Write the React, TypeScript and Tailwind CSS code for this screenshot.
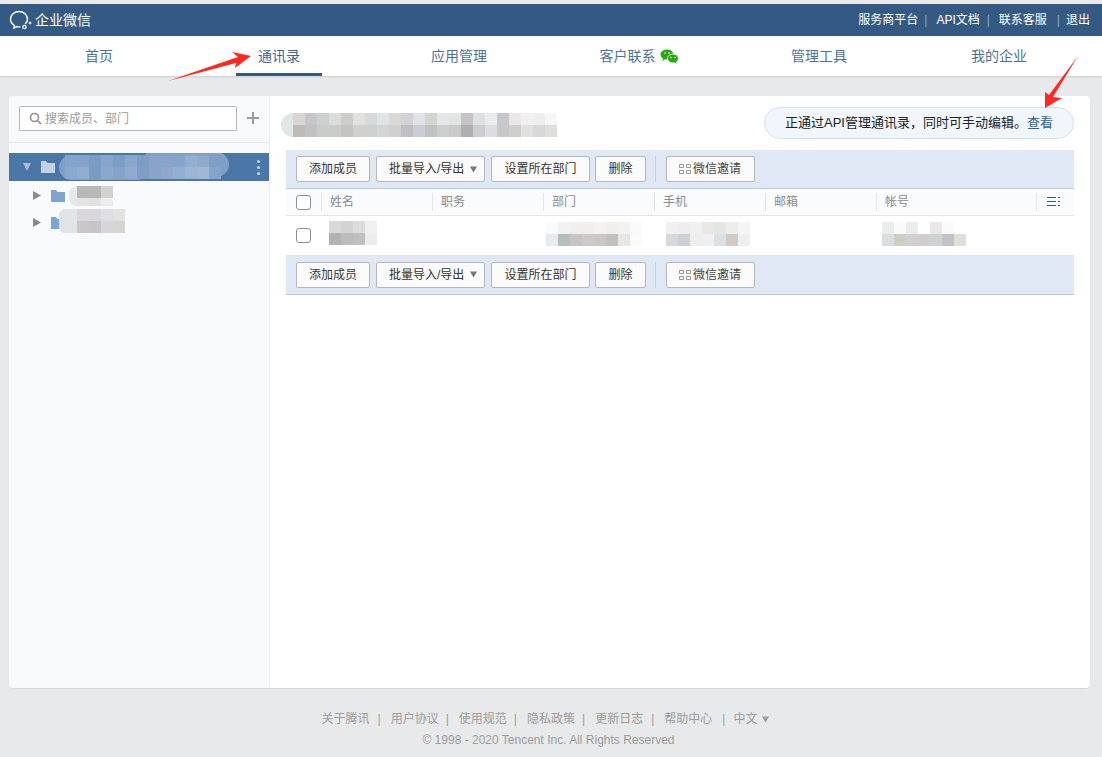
import React from 'react';

const FONT = 'font-["Liberation_Sans","Noto_Sans_CJK_SC",sans-serif]';

const Mosaic = ({ rows, className = '' }: { rows: string[][]; className?: string }) => (
  <div className={`flex flex-col ${className}`}>
    {rows.map((row, i) => (
      <div key={i} className="flex">
        {row.map((c, j) => (
          <div key={j} className={`w-3 h-3 ${c}`} />
        ))}
      </div>
    ))}
  </div>
);

const Folder = ({ className = '' }: { className?: string }) => (
  <svg width="14" height="12" viewBox="0 0 14 12" className={className}>
    <path d="M0 0h5l1.500 2H14v10H0z" fill="currentColor" />
  </svg>
);

const Btn = ({ children, className = '' }: { children: React.ReactNode; className?: string }) => (
  <button className={`h-[26px] flex items-center justify-center bg-[#fbfbfb] border border-[#b4b8bd] rounded-[2px] text-[12px] text-[#333] ${className}`}>
    {children}
  </button>
);

const Toolbar = ({ className = '' }: { className?: string }) => (
  <div className={`flex items-center pl-[10px] bg-[#dfe8f4] border-b border-[#bccadb] ${className}`}>
    <Btn className="w-[74px]">添加成员</Btn>
    <Btn className="w-[109px] ml-[6px] !justify-start pl-3">
      批量导入/导出
      <svg width="7" height="7" viewBox="0 0 7 7" className="ml-[6px] text-[#777]" fill="currentColor">
        <path d="M0 .5h7L3.500 6.500z" />
      </svg>
    </Btn>
    <Btn className="w-[99px] ml-[6px]">设置所在部门</Btn>
    <Btn className="w-[51px] ml-[5px]">删除</Btn>
    <div className="w-px h-[26px] bg-[#c6d2e0] ml-[9px]" />
    <Btn className="w-[89px] ml-[10px] text-[#444] !justify-start pl-3">
      <svg width="12" height="10" viewBox="0 0 12 10" className="mr-[2px] text-[#999]" fill="none" stroke="currentColor">
        <path d="M.5.500h4v3h-4zM7.500.500h4v3h-4zM.5 6.500h4v3h-4zM7.500 6.500h4v3h-4z" />
      </svg>
      微信邀请
    </Btn>
  </div>
);

const Check = () => <div className="w-[15px] h-[15px] border border-[#8e8e8e] rounded-[3px] bg-white" />;

const columns = [
  { label: '姓名', w: 'w-[111px]' },
  { label: '职务', w: 'w-[111px]' },
  { label: '部门', w: 'w-[111px]' },
  { label: '手机', w: 'w-[111px]' },
  { label: '邮箱', w: 'w-[111px]' },
  { label: '帐号', w: 'w-[160px]' },
];

const titleRows = [
  ['bg-[#dfe7e5]', 'bg-[#d8d5d3]', 'bg-[#c8c6cd]', 'bg-[#cdd1d0]', 'bg-[#dcdcda]', 'bg-[#cfcdcc]', 'bg-[#e0e2de]', 'bg-[#d5dadb]', 'bg-[#e2e3e6]', 'bg-[#d9d7d7]', 'bg-[#d3d2d5]', 'bg-[#e0e2ea]', 'bg-[#d2d5d0]', 'bg-[#e4e6e8]', 'bg-[#e2e3e3]', 'bg-[#c5c3c6]', 'bg-[#dfe0e2]', 'bg-[#e9ebee]', 'bg-[#c7c7cb]', 'bg-[#ebe7e6]', 'bg-[#f0f0f2]', 'bg-[#eeeeef]', 'bg-[#f7f7f8]'],
  ['bg-[#dfe8e6]', 'bg-[#bfbbb7]', 'bg-[#c3c0c4]', 'bg-[#c9cdca]', 'bg-[#cbcbc7]', 'bg-[#c6c4c2]', 'bg-[#d0d0cd]', 'bg-[#ccd1d2]', 'bg-[#d3d4d6]', 'bg-[#d1d0cd]', 'bg-[#bfc0c3]', 'bg-[#cccdd3]', 'bg-[#bec5c0]', 'bg-[#cdcfcc]', 'bg-[#c8cacc]', 'bg-[#b1adb1]', 'bg-[#ccced1]', 'bg-[#dcdde0]', 'bg-[#c8c8c8]', 'bg-[#cfcfcc]', 'bg-[#e1e1e1]', 'bg-[#d8d8d6]', 'bg-[#dededb]'],
];

const orgRows = [
  ['bg-[#85a4cb]', 'bg-[#85a3ca]', 'bg-[#7b9cc5]', 'bg-[#87a4ca]', 'bg-[#7d9dc5]', 'bg-[#89a6cb]', 'bg-[#7e9dc5]', 'bg-[#87a4ca]', 'bg-[#8aa3c9]', 'bg-[#84a5cb]', 'bg-[#94aed0]', 'bg-[#8da9cc]', 'bg-[#7f9fc7]'],
  ['bg-[#8ba8cd]', 'bg-[#92accf]', 'bg-[#7a9bc4]', 'bg-[#8ba7cb]', 'bg-[#86a3c9]', 'bg-[#90abce]', 'bg-[#7f9ec5]', 'bg-[#8aa3c9]', 'bg-[#8fa8cc]', 'bg-[#93b0d1]', 'bg-[#9db5d4]', 'bg-[#a1b7d5]', 'bg-[#86a3c9]'],
];

export default function App() {
  return (
    <div className={`relative w-full h-[757px] overflow-hidden bg-[#e8e9eb] pt-1 ${FONT}`}>
      <header className="h-8 bg-[#345a84] flex items-center justify-between pl-[9px] pr-3 text-white">
        <div className="flex items-center">
          <svg width="24" height="24" viewBox="0 0 24 24" fill="none" stroke="#fff" strokeWidth="1.400">
            <path d="M16.500 15.500C17.800 14.200 18.500 12.700 18.500 11 18.500 6.900 14.700 3.500 10 3.500S1.500 6.900 1.500 11c0 2.700 1.500 5 3.800 6.300L5 20l3-1.400c.9.2 1.900.3 2.900.3" strokeLinecap="round" />
            <circle cx="15.500" cy="19" r="1.700" strokeWidth="1.200" />
            <circle cx="21" cy="15" r="1" strokeWidth="1" />
          </svg>
          <span className="ml-[2px] text-[14px]">企业微信</span>
        </div>
        <div className="flex items-center text-[12px]">
          <span>服务商平台</span>
          <span className="ml-[6px] text-[#8ea6c0]">|</span>
          <span className="ml-[9px]">API文档</span>
          <span className="ml-[7px] text-[#8ea6c0]">|</span>
          <span className="ml-[9px]">联系客服</span>
          <span className="ml-[10px] text-[#8ea6c0]">|</span>
          <span className="ml-[6px]">退出</span>
        </div>
      </header>

      <nav className="h-10 bg-white pl-[9px] grid grid-cols-[repeat(6,180px)] text-[14px] text-[#4f7197] shadow-[0_1px_2px_rgba(0,0,0,0.12)]">
        <div className="flex items-center justify-center">首页</div>
        <div className="flex items-center justify-center relative text-[#3f6590]">
          通讯录
          <div className="absolute bottom-0 left-[47px] w-[86px] h-[3px] bg-[#345a84]" />
        </div>
        <div className="flex items-center justify-center">应用管理</div>
        <div className="flex items-center justify-center">
          客户联系
          <svg width="19" height="15" viewBox="0 0 19 15" className="ml-1 text-[#2aa515]" fill="currentColor">
            <ellipse cx="7" cy="5.500" rx="6.500" ry="5" />
            <path d="M3 9l-.5 3 3-2z" />
            <ellipse cx="13" cy="9.500" rx="5.500" ry="4.500" stroke="#fff" strokeWidth=".8" />
            <path d="M16 12.500l.8 2-2.400-1.200z" />
            <circle cx="5" cy="4" r=".8" fill="#fff" />
            <circle cx="9" cy="4" r=".8" fill="#fff" />
            <circle cx="11" cy="8.500" r=".7" fill="#fff" />
            <circle cx="15" cy="8.500" r=".7" fill="#fff" />
          </svg>
        </div>
        <div className="flex items-center justify-center">管理工具</div>
        <div className="flex items-center justify-center">我的企业</div>
      </nav>

      <main className="mx-[9px] mt-5 h-[592px] w-[1081px] flex bg-white rounded-[4px] overflow-hidden shadow-[0_1px_1px_rgba(0,0,0,0.08)]">
        <aside className="w-[261px] shrink-0 bg-[#f9fafc] border-r border-[#e8eaee]">
          <div className="h-[47px] flex items-start pt-[10px] pl-[10px] border-b border-[#e4e6e9]">
            <div className="w-[218px] h-[25px] bg-white border border-[#b4b8bd] rounded-[2px] flex items-center pl-[9px] text-[12px] text-[#9a9a9a]">
              <svg width="13" height="13" viewBox="0 0 13 13" fill="none" stroke="#8f8f8f" strokeWidth="1.600" className="mr-[3px]">
                <circle cx="5.500" cy="5.500" r="4" />
                <path d="M8.500 8.500L12 12" />
              </svg>
              搜索成员、部门
            </div>
            <svg width="12" height="12" viewBox="0 0 12 12" className="ml-[10px] mt-[6px]" fill="#9a9a9a">
              <path d="M5 0h2v5h5v2H7v5H5V7H0V5h5z" />
            </svg>
          </div>
          <div className="mt-[10px] h-7 bg-[#4a76a8] flex items-center pl-[14px] relative overflow-hidden">
            <svg width="8" height="8" viewBox="0 0 8 8" className="mr-[10px] text-[#a9bdd6]" fill="currentColor">
              <path d="M0 0h8L4 8z" />
            </svg>
            <Folder className="text-[#c3d2e4]" />
            <div className="absolute left-[50px] top-[2px] w-[91px] h-[25px] rounded-full bg-[#7f9fc7]" />
            <div className="absolute left-[131px] top-[-1px] w-[89px] h-[25px] rounded-full bg-[#7f9fc7]" />
            <Mosaic rows={orgRows} className="absolute left-[56px] top-[2px]" />
            <div className="absolute right-[9px] top-[7px] flex flex-col gap-[3px]">
              <div className="w-[3px] h-[3px] rounded-full bg-[#c3d2e4]" />
              <div className="w-[3px] h-[3px] rounded-full bg-[#c3d2e4]" />
              <div className="w-[3px] h-[3px] rounded-full bg-[#c3d2e4]" />
            </div>
          </div>
          <div className="h-[27px] mt-px flex items-center pl-6">
            <svg width="8" height="9" viewBox="0 0 8 9" className="mr-[10px] text-[#8a8a8a]" fill="currentColor">
              <path d="M0 0l8 4.500L0 9z" />
            </svg>
            <Folder className="text-[#7fa4d0]" />
            <div className="ml-1 w-2 h-5 rounded-l-full bg-[#e6e8ec]" />
            <div className="h-5 overflow-hidden">
              <Mosaic
                rows={[
                  ['bg-[#b9b6b7]', 'bg-[#b9b7b7]', 'bg-[#d3d2cf]'],
                  ['bg-[#e4e4e4]', 'bg-[#e1e1e1]', 'bg-[#ececec]'],
                ]}
              />
            </div>
          </div>
          <div className="h-[27px] flex items-center pl-6">
            <svg width="8" height="9" viewBox="0 0 8 9" className="mr-[10px] text-[#8a8a8a]" fill="currentColor">
              <path d="M0 0l8 4.500L0 9z" />
            </svg>
            <Folder className="text-[#7fa4d0]" />
            <div className="ml-[-6px] w-[6px] h-6 rounded-l-full bg-[#dbe4f0] -mt-[3px]" />
            <Mosaic
              rows={[
                ['bg-[#e4e3e7]', 'bg-[#d9d7da]', 'bg-[#d9d6dc]', 'bg-[#dfdee2]', 'bg-[#e3e3e3]'],
                ['bg-[#e4e3e6]', 'bg-[#c9c7c9]', 'bg-[#c6c4c6]', 'bg-[#d7d5da]', 'bg-[#d5d5d3]'],
              ]}
              className="-mt-[3px]"
            />
          </div>
        </aside>

        <section className="flex-1 pl-[16px] pr-[16px] min-w-0">
          <div className="h-[54px] flex items-center justify-between">
            <Mosaic rows={titleRows} className="-ml-[5px] mt-[3px] rounded-l-full overflow-hidden" />
            <div className="w-[310px] h-8 rounded-full bg-[#f0f6fc] border border-[#d3e0ee] flex items-center justify-center text-[13px] text-[#222]">
              正通过API管理通讯录，同时可手动编辑。
              <span className="text-[#2f6296]">查看</span>
            </div>
          </div>
          <Toolbar className="h-[39px]" />
          <div className="h-[27px] flex items-center bg-[#fafbfd] border-b border-[#e4e6e9] text-[12px] text-[#8b8b8b]">
            <div className="w-[35px] pl-[10px] flex items-center">
              <Check />
            </div>
            {columns.map((c) => (
              <div key={c.label} className={`${c.w} h-[18px] flex items-center pl-[8px] border-l border-[#e4e6e9]`}>
                {c.label}
              </div>
            ))}
            <div className="flex-1 h-[18px] flex items-center pl-[10px] border-l border-[#e4e6e9]">
              <svg width="13" height="10" viewBox="0 0 13 10" fill="#345a84">
                <path d="M0 0h9v1H0zM0 4h9v1H0zM0 8h9v1H0zM11 0h2v1h-2zM11 4h2v1h-2zM11 8h2v1h-2z" />
              </svg>
            </div>
          </div>
          <div className="h-[39px] flex items-start bg-white">
            <div className="w-[43px] pl-[10px] mt-3">
              <Check />
            </div>
            <Mosaic
              className="mt-[5px]"
              rows={[
                ['bg-[#d9d9d9]', 'bg-[#d3d3d3]', 'bg-[#dcdcdc]', 'bg-[#f0f0f0]'],
                ['bg-[#b2b2b2]', 'bg-[#bcbcbc]', 'bg-[#c0c0c0]', 'bg-[#ececec]'],
              ]}
            />
            <Mosaic
              className="ml-[169px] mt-[6px]"
              rows={[
                ['bg-[#fbfbfb]', 'bg-[#f2f2f1]', 'bg-[#f0f0ee]', 'bg-[#efefed]', 'bg-[#f3f3f1]', 'bg-[#f0efed]', 'bg-[#f2f2f0]', 'bg-[#fafafa]'],
                ['bg-[#e6ebef]', 'bg-[#b3bfbd]', 'bg-[#cbc3c3]', 'bg-[#cbcbcb]', 'bg-[#cbc7c4]', 'bg-[#c4c0be]', 'bg-[#e6e6e3]', 'bg-[#fbfbfb]'],
              ]}
            />
            <Mosaic
              className="ml-6 mt-[6px]"
              rows={[
                ['bg-[#f0f0f0]', 'bg-[#eeeeee]', 'bg-[#f0f0ee]', 'bg-[#e8e8e6]', 'bg-[#e5e5e3]', 'bg-[#ededeb]', 'bg-[#f5f5f5]'],
                ['bg-[#d8d8d8]', 'bg-[#ccd1d3]', 'bg-[#eeeeee]', 'bg-[#f0f0f0]', 'bg-[#dbe1e3]', 'bg-[#d0cbc7]', 'bg-[#efefef]'],
              ]}
            />
            <Mosaic
              className="ml-[132px] mt-[6px]"
              rows={[
                ['bg-[#ebecec]', 'bg-[#fafafa]', 'bg-[#ececec]', 'bg-white', 'bg-[#e8e8e8]', 'bg-[#fafafa]', 'bg-white'],
                ['bg-[#d9dee0]', 'bg-[#ccd0c3]', 'bg-[#d2cfd0]', 'bg-[#d2cdcf]', 'bg-[#ced2d2]', 'bg-[#c2c3c8]', 'bg-[#e1dfda]'],
              ]}
            />
          </div>
          <Toolbar className="h-10" />
        </section>
      </main>

      <footer className="mt-[22px] text-center text-[12px] text-[#9c9c9c]">
        <div className="flex justify-center items-center leading-[18px] pr-[11px]">
          <span>关于腾讯</span>
          <span className="ml-2">|</span>
          <span className="ml-[10px]">用户协议</span>
          <span className="ml-[7px]">|</span>
          <span className="ml-[10px]">使用规范</span>
          <span className="ml-[7px]">|</span>
          <span className="ml-[10px]">隐私政策</span>
          <span className="ml-[7px]">|</span>
          <span className="ml-[10px]">更新日志</span>
          <span className="ml-2">|</span>
          <span className="ml-[10px]">帮助中心</span>
          <span className="ml-[10px]">|</span>
          <span className="ml-[8px]">中文</span>
          <svg width="7" height="7" viewBox="0 0 7 7" className="ml-[5px]" fill="currentColor">
            <path d="M0 .5h7L3.500 6.500z" />
          </svg>
        </div>
        <div className="mt-[3px] leading-[18px] pr-[5px]">© 1998 - 2020 Tencent Inc. All Rights Reserved</div>
      </footer>

      {/* red annotation arrows drawn on top of the screenshot */}
      <svg width="1102" height="757" viewBox="0 0 1102 757" className="absolute left-0 top-0 pointer-events-none">
        <polygon points="168,81 238,57 232,52 251,56 235,68 236,63" fill="#ff2a1f" />
        <polygon points="1078,56 1053,97 1062,98 1045,108 1045,92 1049,95" fill="#ff2a1f" />
      </svg>
    </div>
  );
}
